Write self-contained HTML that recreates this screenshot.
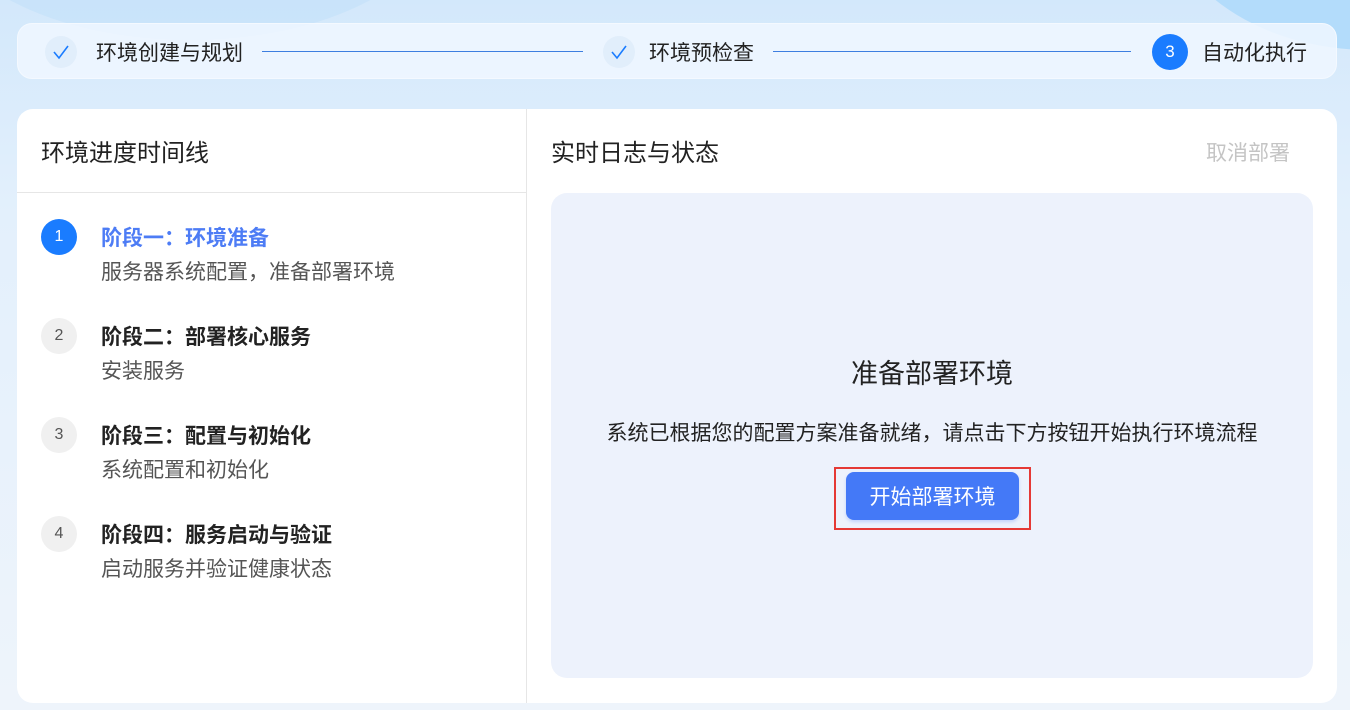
<!DOCTYPE html>
<html><head><meta charset="utf-8"><style>
*{margin:0;padding:0;box-sizing:border-box}
body{width:1350px;height:710px;overflow:hidden;font-family:"Liberation Sans","Noto Sans CJK SC",sans-serif;background:linear-gradient(180deg,#d3e8fb 0%,#e3f0fc 30%,#eef4fb 100%);position:relative;color:#222}
.blob{position:absolute;border-radius:50%}
.top{position:absolute;left:17px;top:23px;width:1320px;height:56px;border-radius:15px;background:rgba(240,247,255,.85);border:1px solid #f4f9ff}
.abs{position:absolute;white-space:nowrap;line-height:1.2}
.chk{position:absolute;width:32px;height:32px;border-radius:50%;background:#e1eefb}
.chk svg{position:absolute;left:7px;top:8px}
.line{position:absolute;height:1px;background:#3d7ee0;top:51px}
.card{position:absolute;left:17px;top:109px;width:1320px;height:594px;background:#fff;border-radius:16px}
.num{position:absolute;width:36px;height:36px;border-radius:50%;background:#f0f0f0;color:#555;text-align:center;line-height:36px;font-size:16px;left:41px}
.t{position:absolute;left:101px;font-size:21px;font-weight:bold;color:#222;line-height:1.2}
.s{position:absolute;left:101px;font-size:21px;color:#555;line-height:1.2}
</style></head><body>
<div class="blob" style="left:-60px;top:-220px;width:500px;height:260px;background:#c5e1fa;opacity:.7"></div>
<div class="blob" style="left:1160px;top:-260px;width:420px;height:310px;background:#b3dcfb"></div>
<div class="top"></div>
<div class="chk" style="left:45px;top:36px"><svg width="18" height="16" viewBox="0 0 18 16"><path d="M2 8 L7 14 L16 2" fill="none" stroke="#1a7cff" stroke-width="1.6"/></svg></div>
<div class="abs" style="left:96px;top:41px;font-size:21px">环境创建与规划</div>
<div class="line" style="left:262px;width:321px"></div>
<div class="chk" style="left:603px;top:36px"><svg width="18" height="16" viewBox="0 0 18 16"><path d="M2 8 L7 14 L16 2" fill="none" stroke="#1a7cff" stroke-width="1.6"/></svg></div>
<div class="abs" style="left:649px;top:41px;font-size:21px">环境预检查</div>
<div class="line" style="left:773px;width:358px"></div>
<div class="chk" style="left:1152px;top:34px;width:36px;height:36px;line-height:36px;background:#1a7cff;color:#fff;font-size:17px;text-align:center">3</div>
<div class="abs" style="left:1202px;top:41px;font-size:21px">自动化执行</div>

<div class="card"></div>
<div class="abs" style="left:526px;top:109px;width:1px;height:594px;background:#e6e6e6"></div>
<div class="abs" style="left:17px;top:192px;width:509px;height:1px;background:#e6e6e6"></div>
<div class="abs" style="left:41px;top:140px;font-size:24px">环境进度时间线</div>

<div class="num" style="top:219px;background:#1a7cff;color:#fff">1</div>
<div class="t" style="top:226px;color:#4d7cf5">阶段一：环境准备</div>
<div class="s" style="top:260px">服务器系统配置，准备部署环境</div>
<div class="num" style="top:318px">2</div>
<div class="t" style="top:325px">阶段二：部署核心服务</div>
<div class="s" style="top:359px">安装服务</div>
<div class="num" style="top:417px">3</div>
<div class="t" style="top:424px">阶段三：配置与初始化</div>
<div class="s" style="top:458px">系统配置和初始化</div>
<div class="num" style="top:516px">4</div>
<div class="t" style="top:523px">阶段四：服务启动与验证</div>
<div class="s" style="top:557px">启动服务并验证健康状态</div>

<div class="abs" style="left:551px;top:140px;font-size:24px">实时日志与状态</div>
<div class="abs" style="left:1206px;top:141px;font-size:21px;color:#c4c4c4">取消部署</div>
<div class="abs" style="left:551px;top:193px;width:762px;height:485px;background:#edf2fc;border-radius:16px"></div>
<div class="abs" style="left:551px;width:762px;top:358px;text-align:center;font-size:27px">准备部署环境</div>
<div class="abs" style="left:551px;width:762px;top:421px;text-align:center;font-size:21px">系统已根据您的配置方案准备就绪，请点击下方按钮开始执行环境流程</div>
<div class="abs" style="left:834px;top:467px;width:197px;height:63px;border:2px solid #e53935"></div>
<div class="abs" style="left:846px;top:472px;width:173px;height:48px;background:#4479f7;border-radius:8px;color:#fff;font-size:21px;text-align:center;line-height:52px;box-shadow:0 2px 3px rgba(68,121,247,.25)">开始部署环境</div>
</body></html>
